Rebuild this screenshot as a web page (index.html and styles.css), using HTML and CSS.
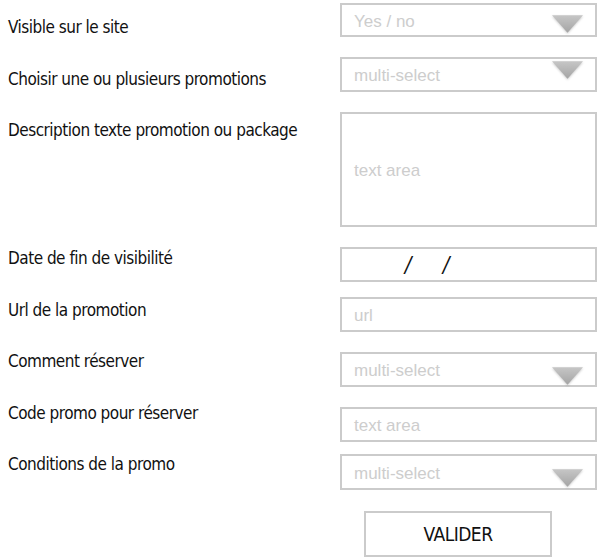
FILE: index.html
```html
<!DOCTYPE html>
<html lang="fr">
<head>
  <meta charset="UTF-8" />
  <meta name="viewport" content="width=device-width, initial-scale=1.0"/>
  <title>Promotion</title>
  <link rel="stylesheet" href="styles.css">
</head>
<body>

  <form class="promo-form" onsubmit="return false">
    <div class="labels">
      <label class="label">Visible sur le site</label>
      <label class="label">Choisir une ou plusieurs promotions</label>
      <label class="label label-long">Description texte promotion ou package</label>
      <label class="label">Date de fin de visibilité</label>
      <label class="label">Url de la promotion</label>
      <label class="label">Comment réserver</label>
      <label class="label">Code promo pour réserver</label>
      <label class="label">Conditions de la promo</label>
    </div>

    <div class="fields">
      <div class="box first">
        Yes / no
        <svg class="arrow arrow-low" viewBox="0 0 30 17"><use href="#tri"/></svg>
      </div>
      <div class="box">
        multi-select
        <svg class="arrow arrow-top" viewBox="0 0 30 17"><use href="#tri"/></svg>
      </div>
      <div class="box area">text area</div>
      <div class="box date">
        <span class="slash">/</span><span class="slash">/</span>
      </div>
      <div class="box near">url</div>
      <div class="box">
        multi-select
        <svg class="arrow arrow-bottom" viewBox="0 0 30 17"><use href="#tri"/></svg>
      </div>
      <div class="box">text area</div>
      <div class="box nearer">
        multi-select
        <svg class="arrow arrow-bottom" viewBox="0 0 30 17"><use href="#tri"/></svg>
      </div>
      <button class="submit" type="submit">VALIDER</button>
    </div>
  </form>

  <svg width="0" height="0" class="defs">
    <defs>
      <linearGradient id="triFill" x1="0" y1="0" x2="0" y2="1">
        <stop offset="0" stop-color="#c6c6c6"/>
        <stop offset="1" stop-color="#a4a4a4"/>
      </linearGradient>
      <g id="tri">
        <polygon points="0,0 30,0 15,17" fill="url(#triFill)"/>
      </g>
    </defs>
  </svg>

</body>
</html>
```

FILE: styles.css
```css
* { box-sizing: border-box; }
body {
  margin: 0;
  background: #fff;
  color: #111;
}

.promo-form {
  display: flex;
  padding: 3px 0 0 8px;
}

/* left column: labels */
.labels {
  width: 332px;
  padding-top: 14px;
  display: flex;
  flex-direction: column;
}

.label {
  font-family: "Liberation Sans Narrow", "DejaVu Sans Condensed", sans-serif;
  font-size: 17px;
  letter-spacing: -0.5px;
  line-height: 20px;
  height: 20px;
  margin-bottom: 31.5px;
  white-space: nowrap;
}

.label-long { margin-bottom: 108px; }

/* right column: fields */
.fields {
  width: 257px;
  display: flex;
  flex-direction: column;
}

.box {
  position: relative;
  height: 35px;
  margin-top: 20px;
  padding: 3px 12px 0;
  border: 2px solid #cbcbcb;
  display: flex;
  align-items: center;
  font-family: "Liberation Sans", Arial, sans-serif;
  font-size: 17px;
  color: #cdcdcd;
}

.box.first { margin-top: 0; height: 34px; }
.box.near { margin-top: 15px; }
.box.nearer { margin-top: 12px; height: 36px; }
.box.area { height: 115px; }

.date {
  padding-top: 0;
  padding-left: 63px;
  font-family: "Liberation Sans Narrow", "DejaVu Sans Condensed", sans-serif;
  font-size: 22px;
  color: #111;
}

.slash {
  display: inline-block;
  transform: skewX(-10deg);
  margin-right: 31px;
}

.arrow {
  position: absolute;
  right: 12px;
  width: 31px;
  height: 18px;
  filter: drop-shadow(0 1px 1px rgba(0, 0, 0, 0.2));
}

.arrow-low { top: 10px; }
.arrow-top { top: 2px; }
.arrow-bottom { top: 13px; }

.submit {
  margin: 21px 0 0 24px;
  width: 188px;
  height: 46px;
  background: #fff;
  border: 2px solid #cbcbcb;
  font-family: "Liberation Sans Narrow", "DejaVu Sans Condensed", sans-serif;
  font-size: 19px;
  letter-spacing: -0.5px;
  color: #111;
  cursor: pointer;
}

.defs { position: absolute; }
```
